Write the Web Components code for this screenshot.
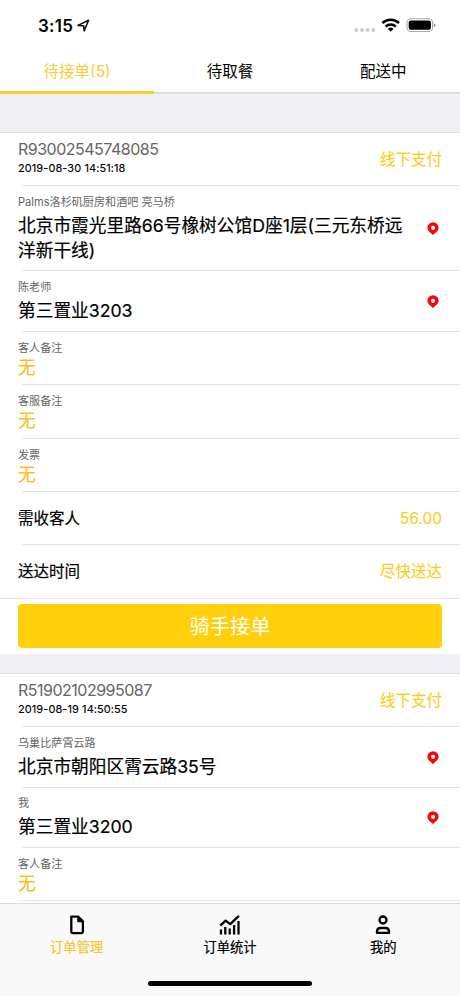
<!DOCTYPE html>
<html lang="zh-CN">
<head>
<meta charset="utf-8">
<title>订单管理</title>
<style>
    body {
        margin: 0;
        background: #efeff4;
        font-family: Inter, "Noto Sans CJK SC", sans-serif;
        color: #000;
    }
</style>
</head>
<body>
<rider-app>
    <status-bar slot="top" time="3:15"></status-bar>
    <tab-strip slot="top">
        <tab-label active>待接单(5)</tab-label>
        <tab-label>待取餐</tab-label>
        <tab-label>配送中</tab-label>
    </tab-strip>

    <order-card>
        <order-head no="R93002545748085" time="2019-08-30 14:51:18">线下支付</order-head>
        <address-row style="--h: 85px" label="Palms洛杉矶厨房和酒吧 亮马桥">北京市霞光里路66号橡树公馆D座1层(三元东桥远洋新干线)</address-row>
        <address-row label="陈老师">第三置业3203</address-row>
        <note-row label="客人备注">无</note-row>
        <note-row label="客服备注" style="--h: 54px">无</note-row>
        <note-row label="发票">无</note-row>
        <value-row label="需收客人">56.00</value-row>
        <value-row label="送达时间" last style="--h: 54px">尽快送达</value-row>
        <accept-button>骑手接单</accept-button>
    </order-card>

    <order-card>
        <order-head no="R51902102995087" time="2019-08-19 14:50:55">线下支付</order-head>
        <address-row label="乌巢比萨霄云路">北京市朝阳区霄云路35号</address-row>
        <address-row label="我" style="--h: 60px; --top: 7px">第三置业3200</address-row>
        <note-row label="客人备注">无</note-row>
        <note-row label="客服备注">无</note-row>
    </order-card>

    <bottom-bar slot="bottom">
        <bottom-item icon="file" active>订单管理</bottom-item>
        <bottom-item icon="chart">订单统计</bottom-item>
        <bottom-item icon="user">我的</bottom-item>
    </bottom-bar>
</rider-app>

<script>
class BaseElement extends HTMLElement {

    constructor() {
        super();
        this.shadowDOM = this.attachShadow({mode: "open"});
    }

    connectedCallback() {
        this.shadowDOM.innerHTML = `<style>* { box-sizing: border-box; }</style>` + this.render();
    }

    attr(name) {
        return this.getAttribute(name) || "";
    }
}

class RiderApp extends BaseElement {
    render() {
        return `
           <style>
               :host {
                   display: flex;
                   flex-direction: column;
                   height: 996px;
                   overflow: hidden;
               }
               main {
                   flex: 1;
                   min-height: 0;
                   overflow: hidden;
                   padding-top: 38px;
                   display: flex;
                   flex-direction: column;
                   gap: 19px;
               }
           </style>
           <slot name="top"></slot>
           <main><slot></slot></main>
           <slot name="bottom"></slot>`;
    }
}

class StatusBar extends BaseElement {
    render() {
        return `
           <style>
               :host {
                   display: flex;
                   justify-content: space-between;
                   height: 50px;
                   padding: 0 24px 0 38px;
                   background: #fff;
                   box-sizing: border-box;
               }
               .time {
                   display: flex;
                   gap: 4px;
                   padding-top: 16px;
                   font-size: 17px;
                   line-height: 20px;
                   font-weight: 600;
                   letter-spacing: .3px;
               }
               .time svg {
                   margin-top: 3px;
               }
               .icons {
                   padding-top: 16px;
               }
               svg {
                   display: block;
               }
           </style>
           <div class="time">
               <span>${this.attr("time")}</span>
               <svg width="13" height="13" viewBox="0 0 13 13" fill="none" stroke="#111" stroke-width="1.6" stroke-linejoin="round"><path d="M1 6.4 11.6 1.3 7.2 11.8 6.6 6.8Z"/></svg>
           </div>
           <div class="icons">
               <svg width="82" height="18" viewBox="0 0 82 18">
                   <g fill="#cbcbcd"><circle cx="2.4" cy="14" r="1.9"/><circle cx="8" cy="14" r="1.9"/><circle cx="13.6" cy="14" r="1.9"/><circle cx="19.2" cy="14" r="1.9"/></g>
                   <g fill="none" stroke="#000" stroke-width="2.5"><path d="M28.4 7a12 12 0 0 1 16.6 0"/><path d="M31.6 10.5a7.4 7.4 0 0 1 10.2 0"/></g>
                   <path d="M36.7 15.7 33.9 12.9a4 4 0 0 1 5.6 0Z"/>
                   <rect x="53" y="2.7" width="25.6" height="12.8" rx="3.8" fill="none" stroke="#aaa" stroke-width="1.1"/>
                   <rect x="54.7" y="4.4" width="22.2" height="9.4" rx="2"/>
                   <path d="M79.8 7.2v4q1.7-.6 1.7-2t-1.7-2" fill="#999"/>
               </svg>
           </div>`;
    }
}

class TabStrip extends BaseElement {
    render() {
        return `
           <style>
               :host {
                   display: grid;
                   grid-template-columns: repeat(3, 1fr);
                   height: 44px;
                   background: linear-gradient(#fff 42px, #d8d8dc 42px, #e4e4e8 44px);
               }
           </style>
           <slot></slot>`;
    }
}

class TabLabel extends BaseElement {
    render() {
        return `
           <style>
               :host {
                   display: block;
                   box-sizing: border-box;
                   text-align: center;
                   font-size: 15.5px;
                   line-height: 43px;
                   height: 44px;
               }
               :host([active]) {
                   color: #fbcd32;
                   border-bottom: 3px solid #fbcc2a;
                   margin-right: -1px;
               }
           </style>
           <slot></slot>`;
    }
}

class OrderCard extends BaseElement {
    render() {
        return `
           <style>
               :host {
                   display: block;
                   flex: none;
                   border-top: 1px solid #dedee2;
                   background: #fff;
               }
           </style>
           <slot></slot>`;
    }
}

// inset hairline shared by all rows of a card
const rowStyle = `
    :host {
        display: flex;
        justify-content: space-between;
        box-sizing: border-box;
        padding: 0 18px;
        background: linear-gradient(#e5e5e7, #e5e5e7) 22px 100% / 100% 1px no-repeat;
    }
    .label {
        color: #666;
        font-size: 11.1px;
        line-height: 16px;
    }`;

class OrderHead extends BaseElement {
    render() {
        return `
           <style>
               ${rowStyle}
               :host {
                   height: 53px;
                   align-items: center;
               }
               .no {
                   color: #666;
                   font-size: 16px;
                   line-height: 20px;
                   letter-spacing: -.5px;
               }
               .time {
                   font-size: 11px;
                   line-height: 18px;
                   letter-spacing: .08px;
                   -webkit-text-stroke: .15px;
               }
               .left {
                   padding-bottom: 4px;
               }
               .pay {
                   padding-bottom: 1px;
                   color: #fbcd20;
                   font-size: 15.5px;
                   line-height: 23px;
                   -webkit-text-stroke: .1px;
               }
           </style>
           <div class="left">
               <div class="no">${this.attr("no")}</div>
               <div class="time">${this.attr("time")}</div>
           </div>
           <div class="pay"><slot></slot></div>`;
    }
}

class AddressRow extends BaseElement {
    render() {
        return `
           <style>
               ${rowStyle}
               :host {
                   height: var(--h, 61px);
                   align-items: center;
                   padding-right: 20px;
               }
               .text {
                   align-self: flex-start;
                   width: 390px;
                   padding-top: var(--top, 8px);
               }
               .address {
                   margin-top: 3px;
                   font-size: 17.7px;
                   line-height: 25px;
                   -webkit-text-stroke: .2px;
               }
               svg {
                   flex: none;
               }
           </style>
           <div class="text">
               <div class="label">${this.attr("label")}</div>
               <div class="address"><slot></slot></div>
           </div>
           <svg width="14" height="14" viewBox="0 0 14 14"><path fill="#f80808" fill-rule="evenodd" d="M7 .2a5.6 5.6 0 0 0-5.6 5.6c0 3.6 4.5 5.7 5.6 7.5 1.1-1.8 5.6-3.9 5.6-7.5A5.6 5.6 0 0 0 7 .2ZM7 3.7a2.1 2.1 0 1 1 0 4.2 2.1 2.1 0 0 1 0-4.2Z"/></svg>`;
    }
}

class NoteRow extends BaseElement {
    render() {
        return `
           <style>
               ${rowStyle}
               :host {
                   height: var(--h, 53px);
                   padding-top: 8px;
               }
               .value {
                   color: #fbbd1c;
                   font-size: 17.7px;
                   line-height: 24px;
                   -webkit-text-stroke: .2px;
               }
           </style>
           <div>
               <div class="label">${this.attr("label")}</div>
               <div class="value"><slot></slot></div>
           </div>`;
    }
}

class ValueRow extends BaseElement {
    render() {
        return `
           <style>
               ${rowStyle}
               :host {
                   height: var(--h, 53px);
                   align-items: center;
                   font-size: 15.5px;
                   line-height: 23px;
               }
               :host([last]) {
                   padding-bottom: 1px;
                   background-position: 0 100%;
               }
               .name {
                   -webkit-text-stroke: .2px;
               }
               .value {
                   color: #fbcd20;
                   -webkit-text-stroke: .1px;
               }
           </style>
           <div class="name">${this.attr("label")}</div>
           <div class="value"><slot></slot></div>`;
    }
}

class AcceptButton extends BaseElement {
    render() {
        return `
           <style>
               :host {
                   display: block;
                   padding: 5px 18px 6px;
               }
               button {
                   display: block;
                   width: 100%;
                   height: 44px;
                   padding: 2px 0 0;
                   border: 0;
                   border-radius: 4px;
                   background: #ffcf0c;
                   color: #fff;
                   font: inherit;
                   font-size: 20.2px;
                   line-height: 42px;
               }
           </style>
           <button><slot></slot></button>`;
    }
}

class BottomBar extends BaseElement {
    render() {
        return `
           <style>
               :host {
                   display: block;
                   flex: none;
                   height: 93px;
                   border-top: 1px solid #d9d9d9;
                   background: #f9f9f9;
                   box-sizing: border-box;
               }
               nav {
                   display: grid;
                   grid-template-columns: repeat(3, 1fr);
                   height: 77px;
               }
               .home {
                   width: 164px;
                   height: 5px;
                   margin: 0 auto;
                   border-radius: 3px;
                   background: #000;
               }
           </style>
           <nav><slot></slot></nav>
           <div class="home"></div>`;
    }
}

const icons = {
    file: `<path d="M6.3 2.7h7l4.6 4.6v10.5a1.3 1.3 0 0 1-1.3 1.3H7.6a1.3 1.3 0 0 1-1.3-1.3Z"/><path d="M12.8 2.4v5.4h5.4Z" fill="#000" stroke-width="1"/>`,
    chart: `<path d="M2.3 11.6 7.6 6.6l4.6 3.6 8.7-8.4M3 20.5v-5M7.3 20.5v-7.5M11.7 20.5v-6M16.1 20.5V11M20.5 20.5V7"/>`,
    user: `<circle cx="12" cy="6" r="3.5"/><path d="M6 18.9v-1.5a3.6 3.6 0 0 1 3.6-3.4h4.8a3.6 3.6 0 0 1 3.6 3.4v1.5Z"/>`
};

class BottomItem extends BaseElement {
    render() {
        return `
           <style>
               :host {
                   display: flex;
                   flex-direction: column;
                   align-items: center;
                   padding-top: 10px;
                   font-size: 13.3px;
                   line-height: 20px;
                   -webkit-text-stroke: .2px;
               }
               :host([active]) {
                   color: #fbc42c;
               }
               svg {
                   fill: none;
                   stroke: #000;
                   stroke-width: 2.3;
                   stroke-linejoin: round;
               }
           </style>
           <svg width="24" height="23" viewBox="0 0 24 23">${icons[this.attr("icon")]}</svg>
           <span><slot></slot></span>`;
    }
}

customElements.define("rider-app", RiderApp);
customElements.define("status-bar", StatusBar);
customElements.define("tab-strip", TabStrip);
customElements.define("tab-label", TabLabel);
customElements.define("order-card", OrderCard);
customElements.define("order-head", OrderHead);
customElements.define("address-row", AddressRow);
customElements.define("note-row", NoteRow);
customElements.define("value-row", ValueRow);
customElements.define("accept-button", AcceptButton);
customElements.define("bottom-bar", BottomBar);
customElements.define("bottom-item", BottomItem);
</script>
</body>
</html>
